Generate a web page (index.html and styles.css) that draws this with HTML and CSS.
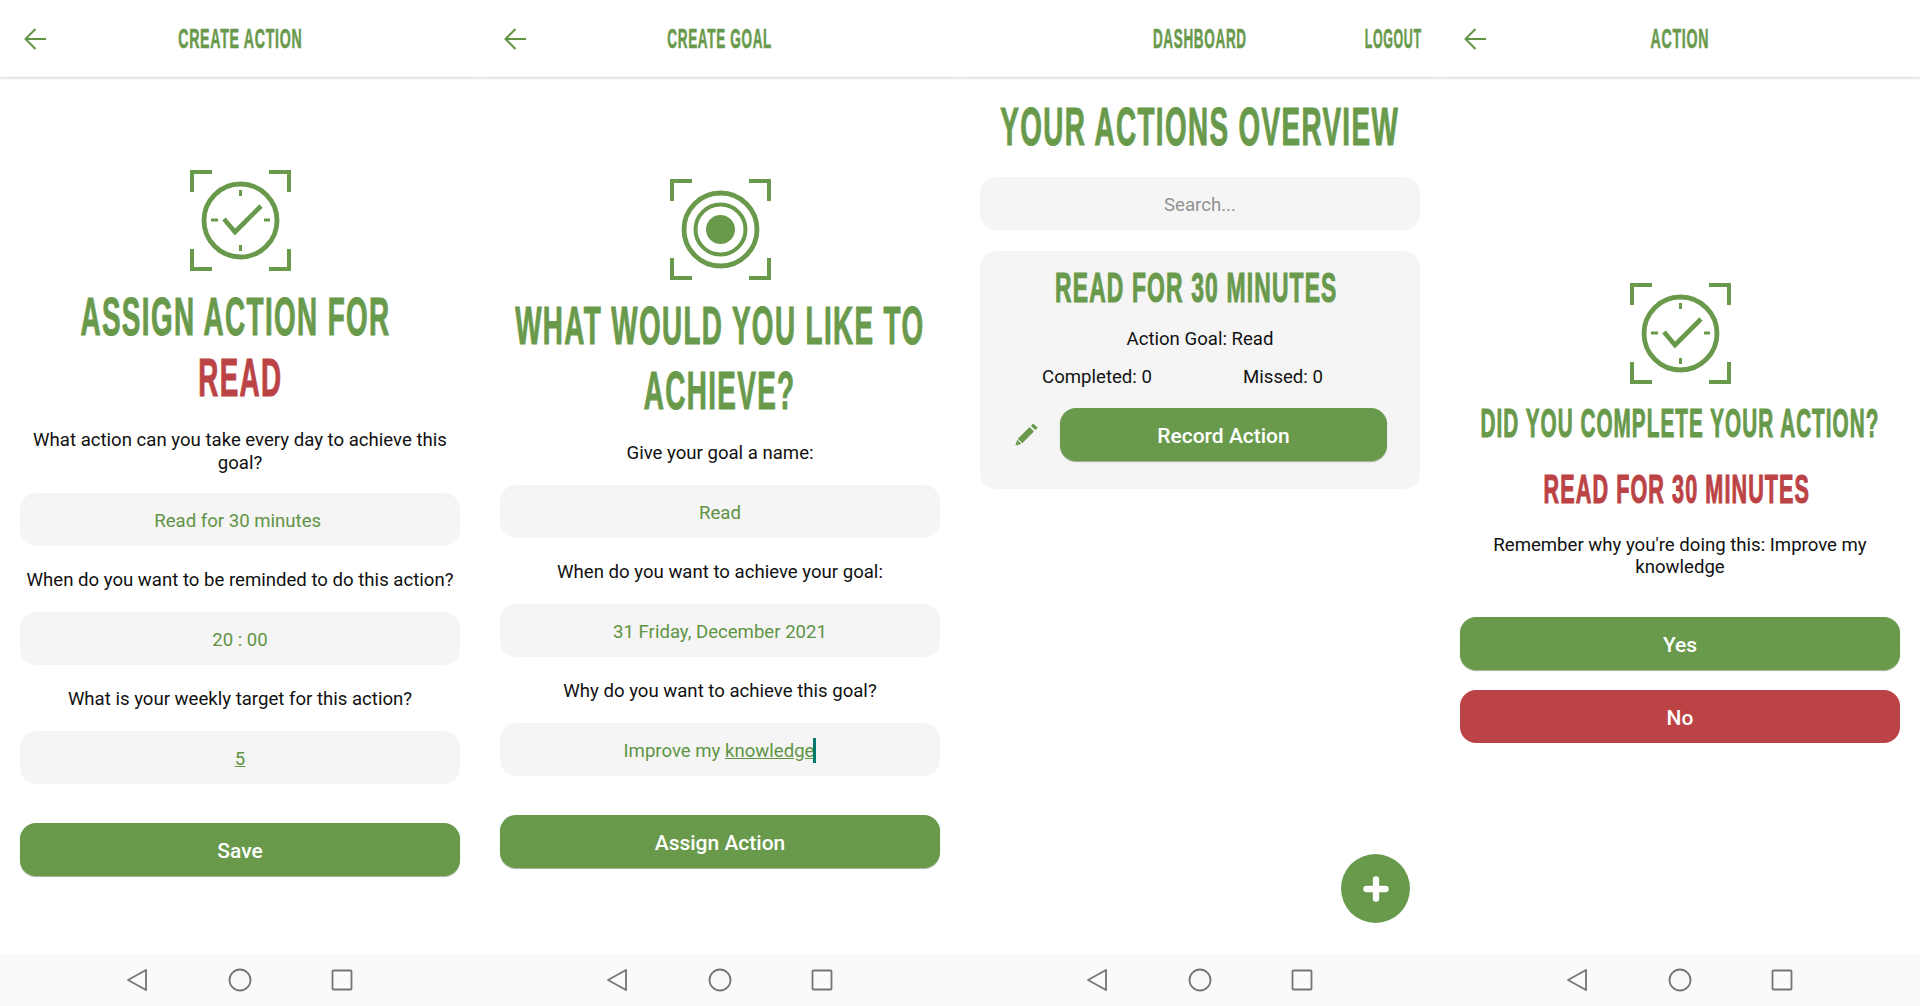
FILE: index.html
```html
<!DOCTYPE html>
<html lang="en">
<head>
	<title>Actions</title>
	<meta charset="utf-8" />
	<link rel="stylesheet" href="styles.css">
</head>
<body>
<svg class="defs" xmlns="http://www.w3.org/2000/svg">
	<symbol id="brackets" viewBox="0 0 101 101">
		<path fill="none" stroke="currentColor" stroke-width="4" d="M2 22V2H22M79 2H99V22M2 79V99H22M79 99H99V79" />
	</symbol>
	<symbol id="clock" viewBox="0 0 101 101">
		<use href="#brackets" />
		<circle cx="50.5" cy="50.5" r="36.5" fill="none" stroke="currentColor" stroke-width="4.8" />
		<path fill="none" stroke="currentColor" stroke-width="3" d="M50.5 20V26M50.5 75V81M21 50H28M74 50H80" />
		<path fill="none" stroke="currentColor" stroke-width="4.6" d="M34 49L45 62L71 36" />
	</symbol>
	<symbol id="target" viewBox="0 0 101 101">
		<use href="#brackets" />
		<circle cx="50.5" cy="50.5" r="36.5" fill="none" stroke="currentColor" stroke-width="4.8" />
		<circle cx="50.5" cy="50.5" r="25" fill="none" stroke="currentColor" stroke-width="4" />
		<circle cx="50.5" cy="50.5" r="14.5" fill="currentColor" />
	</symbol>
	<symbol id="back" viewBox="0 0 22 22">
		<path fill="none" stroke="currentColor" stroke-width="2" d="M22 11H2M11.5 1L1.5 11L11.5 21" />
	</symbol>
	<symbol id="navback" viewBox="0 0 22 24">
		<path fill="none" stroke="currentColor" stroke-width="1.8" stroke-linejoin="round" d="M20 2V22L2 12Z" />
	</symbol>
	<symbol id="navhome" viewBox="0 0 24 24">
		<circle cx="12" cy="12" r="10.5" fill="none" stroke="currentColor" stroke-width="1.8" />
	</symbol>
	<symbol id="navrecent" viewBox="0 0 22 22">
		<rect x="1.5" y="1.5" width="19" height="19" rx="1" fill="none" stroke="currentColor" stroke-width="1.8" />
	</symbol>
</svg>

<!-- create action -->
<section class="screen">
	<header class="topbar">
		<svg class="back"><use href="#back" /></svg>
		<span class="topbar-title"><span class="squeeze">Create Action</span></span>
	</header>
	<main class="body body-action">
		<svg class="hero"><use href="#clock" /></svg>
		<h1 class="headline headline-action">
			<span class="squeeze">Assign Action For </span>
			<span class="squeeze red">Read</span>
		</h1>
		<div class="form form-action">
			<p class="label label-wrap">What action can you take every day to achieve this goal?</p>
			<div class="field">Read for 30 minutes </div>
			<p class="label">When do you want to be reminded to do this action?</p>
			<div class="field">20 : 00</div>
			<p class="label">What is your weekly target for this action?</p>
			<div class="field"><u>5</u></div>
			<button class="btn btn-submit">Save</button>
		</div>
	</main>
	<nav class="softkeys">
		<svg class="key key-back"><use href="#navback" /></svg>
		<svg class="key key-home"><use href="#navhome" /></svg>
		<svg class="key key-recent"><use href="#navrecent" /></svg>
	</nav>
</section>

<!-- create goal -->
<section class="screen">
	<header class="topbar">
		<svg class="back"><use href="#back" /></svg>
		<span class="topbar-title"><span class="squeeze squeeze-tight">Create Goal</span></span>
	</header>
	<main class="body body-goal">
		<svg class="hero"><use href="#target" /></svg>
		<h1 class="headline headline-goal">
			<span class="squeeze">What Would You Like To</span>
			<span class="squeeze">Achieve?</span>
		</h1>
		<div class="form form-goal">
			<p class="label">Give your goal a name:</p>
			<div class="field">Read</div>
			<p class="label">When do you want to achieve your goal:</p>
			<div class="field">31 Friday, December 2021</div>
			<p class="label">Why do you want to achieve this goal?</p>
			<div class="field">Improve my <u>knowledge</u><i class="caret"></i></div>
			<button class="btn btn-submit">Assign Action</button>
		</div>
	</main>
	<nav class="softkeys">
		<svg class="key key-back"><use href="#navback" /></svg>
		<svg class="key key-home"><use href="#navhome" /></svg>
		<svg class="key key-recent"><use href="#navrecent" /></svg>
	</nav>
</section>

<!-- overview -->
<section class="screen">
	<header class="topbar">
		<span></span>
		<span class="topbar-title"><span class="squeeze squeeze-tight">Dashboard</span></span>
		<span class="topbar-link"><span class="squeeze">Logout</span></span>
	</header>
	<main class="body body-overview">
		<h1 class="headline headline-overview">
			<span class="squeeze">Your Actions Overview</span>
		</h1>
		<div class="field field-search">Search...</div>
		<article class="card">
			<h2 class="card-title"><span class="squeeze">Read For 30 Minutes </span></h2>
			<p class="label card-goal">Action Goal: Read</p>
			<div class="stats">
				<span>Completed: 0</span>
				<span>Missed: 0</span>
			</div>
			<div class="card-actions">
				<svg class="pencil" viewBox="0 0 24 24">
					<path fill="currentColor" d="M19 .4L23.6 5L21.2 7.4L16.6 2.8ZM15.2 4.2L19.8 8.8L7.6 21L3 16.4ZM2.3 17.4L6.6 21.7L.4 23.6Z" />
				</svg>
				<button class="btn btn-record">Record Action</button>
			</div>
		</article>
	</main>
	<button class="fab">
		<svg class="fab-plus" viewBox="0 0 26 26">
			<path fill="none" stroke="#fff" stroke-width="6.4" stroke-linecap="round" d="M13 3.5V22.5M3.5 13H22.5" />
		</svg>
	</button>
	<nav class="softkeys">
		<svg class="key key-back"><use href="#navback" /></svg>
		<svg class="key key-home"><use href="#navhome" /></svg>
		<svg class="key key-recent"><use href="#navrecent" /></svg>
	</nav>
</section>

<!-- record action -->
<section class="screen">
	<header class="topbar">
		<svg class="back"><use href="#back" /></svg>
		<span class="topbar-title"><span class="squeeze">Action</span></span>
	</header>
	<main class="body body-record">
		<svg class="hero"><use href="#clock" /></svg>
		<h1 class="headline headline-record">
			<span class="squeeze squeeze-record">Did You Complete Your Action?</span>
		</h1>
		<h2 class="headline headline-record headline-name">
			<span class="squeeze squeeze-name red">Read For 30 Minutes </span>
		</h2>
		<p class="label label-why">Remember why you're doing this: Improve my knowledge</p>
		<button class="btn btn-yes">Yes</button>
		<button class="btn btn-no">No</button>
	</main>
	<nav class="softkeys">
		<svg class="key key-back"><use href="#navback" /></svg>
		<svg class="key key-home"><use href="#navhome" /></svg>
		<svg class="key key-recent"><use href="#navrecent" /></svg>
	</nav>
</section>
</body>
</html>
```

FILE: styles.css
```css
body {
	margin: 0;
	display: flex;
	height: 1006px;
	overflow: hidden;
	background: #fff;
	color: #111;
	font: 18.6px/24px Roboto, sans-serif;
}
.defs {
	display: none;
}
.screen {
	position: relative;
	width: 480px;
	height: 1006px;
	display: flex;
	flex-direction: column;
}

/* top bar */
.topbar {
	height: 77px;
	flex: none;
	display: grid;
	grid-template-columns: 1fr auto 1fr;
	align-items: center;
	color: #699a4c;
	box-shadow: 0 1px 3px rgba(0, 0, 0, 0.2);
	clip-path: inset(0 0 -6px 0);
	font: 700 27px/32px "Liberation Sans Narrow", "Liberation Sans", sans-serif;
	text-transform: uppercase;
}
.back {
	width: 22px;
	height: 22px;
	margin: 1px 0 0 24px;
	color: #5f9445;
}
.topbar-link {
	justify-self: end;
	padding-right: 18px;
}
.topbar-link .squeeze {
	transform: scaleX(0.46);
	transform-origin: right;
}

/* the headings are a condensed display face, so the narrow font is pressed further */
.squeeze {
	display: inline-block;
	white-space: pre;
	letter-spacing: 0.05em;
	transform: scaleX(0.525);
	-webkit-text-stroke: 0.6px currentColor;
}
.squeeze-tight {
	transform: scaleX(0.5);
}
.squeeze-record {
	transform: scaleX(0.505);
}
.squeeze-name {
	transform: scaleX(0.54);
}
.red {
	color: #bc4345;
}

/* content */
.body {
	flex: 1;
	padding: 0 20px;
	display: flex;
	flex-direction: column;
	align-items: stretch;
}
.body-action {
	padding-top: 93px;
}
.body-goal {
	padding-top: 102px;
}
.body-overview {
	padding-top: 20px;
}
.body-record {
	padding-top: 206px;
}
.hero {
	width: 101px;
	height: 101px;
	flex: none;
	align-self: center;
	color: #699a4c;
}
.headline {
	margin: 0;
	display: flex;
	flex-direction: column;
	align-items: center;
	color: #699a4c;
	font: 700 53px/60px "Liberation Sans Narrow", "Liberation Sans", sans-serif;
	text-transform: uppercase;
}
.headline .squeeze {
	-webkit-text-stroke-width: 1.1px;
}
.headline-action {
	margin-top: 15px;
	line-height: 61px;
}
.headline-goal {
	margin-top: 13px;
	line-height: 65px;
}
.headline-record {
	margin-top: 16px;
	font-size: 41px;
	line-height: 46px;
}
.headline-name {
	margin-top: 20px;
	font-size: 40px;
}
.form {
	display: flex;
	flex-direction: column;
	gap: 21px;
}
.form-action {
	margin-top: 20px;
}
.form-goal {
	margin-top: 17px;
}
.label {
	margin: 0 0 -1px;
	padding-top: 1px;
	text-align: center;
}
.label-wrap {
	margin-bottom: -3px;
	line-height: 23px;
}
.label-why {
	margin-top: 21px;
	line-height: 22px;
}
.field {
	height: 53px;
	flex: none;
	box-sizing: border-box;
	padding-top: 2px;
	border-radius: 16px;
	background: #f5f5f5;
	color: #5f9445;
	display: flex;
	align-items: center;
	justify-content: center;
	white-space: pre;
}
.field-search {
	margin-top: 20px;
	color: #929292;
}
.caret {
	width: 3px;
	height: 25px;
	margin-left: -1px;
	background: #00796b;
}

/* buttons */
.btn {
	height: 53px;
	flex: none;
	padding: 3px 0 0;
	border: 0;
	border-radius: 16px;
	background: #699a4c;
	color: #fff;
	font: 500 21px/24px Roboto, sans-serif;
	box-shadow: 0 1px 1px rgba(60, 100, 40, 0.5);
}
.btn-submit {
	margin-top: 18px;
}
.btn-yes {
	margin-top: 40px;
}
.btn-no {
	margin-top: 20px;
	background: #bc4345;
	box-shadow: none;
}
.btn-record {
	width: 327px;
}

/* overview card */
.card {
	margin-top: 21px;
	height: 238px;
	box-sizing: border-box;
	padding-top: 15px;
	border-radius: 16px;
	background: #f5f5f5;
}
.card-title {
	margin: 0;
	display: flex;
	justify-content: center;
	color: #699a4c;
	font: 700 42px/44px "Liberation Sans Narrow", "Liberation Sans", sans-serif;
	text-transform: uppercase;
}
.card-title .squeeze {
	transform: scaleX(0.545);
	-webkit-text-stroke-width: 1.1px;
}
.card-goal {
	margin-top: 16px;
}
.stats {
	margin-top: 15px;
	padding: 0 44px 0 24px;
	display: grid;
	grid-template-columns: 1fr 1fr;
	text-align: center;
}
.card-actions {
	margin-top: 19px;
	padding-left: 35px;
	display: flex;
	align-items: center;
	gap: 22px;
}
.pencil {
	width: 23px;
	height: 23px;
	color: #699a4c;
}
.fab {
	position: absolute;
	right: 30px;
	bottom: 83px;
	width: 69px;
	height: 69px;
	padding: 0;
	border: 0;
	border-radius: 50%;
	background: #699a4c;
	display: flex;
	align-items: center;
	justify-content: center;
}
.fab-plus {
	width: 26px;
	height: 26px;
}

/* android keys */
.softkeys {
	height: 52px;
	flex: none;
	box-sizing: border-box;
	padding-right: 2px;
	background: #fafafa;
	color: #757575;
	display: flex;
	align-items: center;
	justify-content: center;
	gap: 80px;
}
.key-back {
	width: 22px;
	height: 24px;
}
.key-home {
	width: 24px;
	height: 24px;
}
.key-recent {
	width: 22px;
	height: 22px;
	margin-left: -1px;
}
```
